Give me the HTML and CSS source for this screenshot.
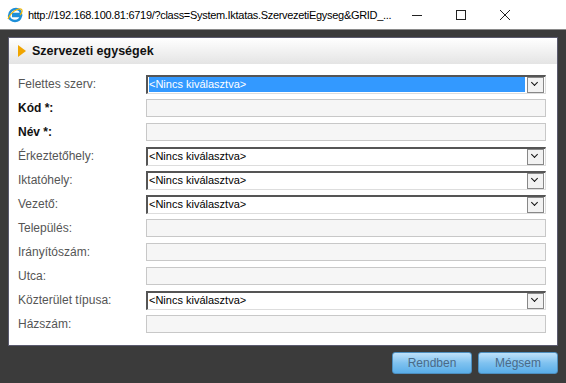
FILE: index.html
```html
<!DOCTYPE html>
<html lang="hu">
<head>
    <meta charset="UTF-8">
    <title>Szervezeti egységek</title>
    <link rel="stylesheet" href="styles.css">
</head>
<body>
    <div class="titlebar">
        <svg class="ie-logo" width="16" height="16" viewBox="0 0 16 16">
            <path d="M2 9 C2 4 6 2 9 2 C12 2 14 4 14 7 L5 7 M5 9 L14 9 C13 13 10 14 8 14 C5 14 2 12 2 9" fill="none" stroke="#1e8fd8" stroke-width="2.4"/>
            <path d="M1 12 C3 6 10 1 14 2 C16 3 15 6 13 8" fill="none" stroke="#f2b600" stroke-width="1.2"/>
        </svg>
        <span class="url">http://192.168.100.81:6719/?class=System.Iktatas.SzervezetiEgyseg&amp;GRID_...</span>
        <div class="win-buttons">
            <svg width="12" height="12" viewBox="0 0 12 12"><path d="M1 6.5 H11" stroke="#222" stroke-width="1"/></svg>
            <svg width="12" height="12" viewBox="0 0 12 12"><rect x="1.5" y="1.5" width="9" height="9" fill="none" stroke="#222" stroke-width="1"/></svg>
            <svg width="12" height="12" viewBox="0 0 12 12"><path d="M1 1 L11 11 M11 1 L1 11" stroke="#222" stroke-width="1"/></svg>
        </div>
    </div>

    <div class="frame">
        <div class="panel">
            <div class="panel-header">
                <span class="arrow"></span>
                <span>Szervezeti egységek</span>
            </div>
            <div class="form">
                <div class="row">
                    <label>Felettes szerv:</label>
                    <div class="combo selected"><span class="value">&lt;Nincs kiválasztva&gt;</span><span class="drop"></span></div>
                </div>
                <div class="row">
                    <label class="req">Kód *:</label>
                    <div class="field"></div>
                </div>
                <div class="row">
                    <label class="req">Név *:</label>
                    <div class="field"></div>
                </div>
                <div class="row">
                    <label>Érkeztetőhely:</label>
                    <div class="combo"><span class="value">&lt;Nincs kiválasztva&gt;</span><span class="drop"></span></div>
                </div>
                <div class="row">
                    <label>Iktatóhely:</label>
                    <div class="combo"><span class="value">&lt;Nincs kiválasztva&gt;</span><span class="drop"></span></div>
                </div>
                <div class="row">
                    <label>Vezető:</label>
                    <div class="combo"><span class="value">&lt;Nincs kiválasztva&gt;</span><span class="drop"></span></div>
                </div>
                <div class="row">
                    <label>Település:</label>
                    <div class="field"></div>
                </div>
                <div class="row">
                    <label>Irányítószám:</label>
                    <div class="field"></div>
                </div>
                <div class="row">
                    <label>Utca:</label>
                    <div class="field"></div>
                </div>
                <div class="row">
                    <label>Közterület típusa:</label>
                    <div class="combo"><span class="value">&lt;Nincs kiválasztva&gt;</span><span class="drop"></span></div>
                </div>
                <div class="row">
                    <label>Házszám:</label>
                    <div class="field"></div>
                </div>
            </div>
        </div>
        <div class="actions">
            <button>Rendben</button>
            <button>Mégsem</button>
        </div>
    </div>
</body>
</html>
```

FILE: styles.css
```css
body {
    margin: 0;
    font-family: "Liberation Sans", Arial, sans-serif;
    font-size: 12px;
    background: #3b3b3b;
    width: 566px;
    height: 383px;
    overflow: hidden;
}

.titlebar {
    height: 30px;
    background: #fff;
    display: flex;
    align-items: center;
    padding-left: 7px;
    box-sizing: border-box;
    border-bottom: 1px solid #8a8a8a;
}

.ie-logo {
    margin-right: 5px;
    flex-shrink: 0;
}

.url {
    font-family: "Liberation Sans", Arial, sans-serif;
    font-size: 11px;
    letter-spacing: -0.3px;
    color: #000;
    white-space: nowrap;
}

.win-buttons {
    margin-left: auto;
    display: flex;
    gap: 32px;
    padding-right: 55px;
    flex-shrink: 0;
}

.frame {
    padding: 7px 8px 0 8px;
}

.panel {
    background: #fff;
    border: 1px solid #5a5a6e;
    height: 309px;
    box-sizing: border-box;
}

.panel-header {
    height: 26px;
    background: linear-gradient(to bottom, #ffffff, #e4e4e4);
    display: flex;
    align-items: center;
    font-weight: bold;
    font-size: 12.5px;
    color: #111;
    padding-left: 9px;
}

.arrow {
    width: 0;
    height: 0;
    border-top: 6px solid transparent;
    border-bottom: 6px solid transparent;
    border-left: 8px solid #f0a500;
    margin-right: 6px;
}

.form {
    padding: 8px 11px 0 9px;
}

.row {
    display: flex;
    align-items: center;
    height: 24px;
}

.row label {
    width: 128px;
    color: #555;
}

.row label.req {
    color: #111;
    font-weight: bold;
}

.field {
    flex: 1;
    height: 18px;
    background: #f6f6f6;
    border: 1px solid #c8c8c8;
    box-sizing: border-box;
}

.combo {
    flex: 1;
    height: 19px;
    box-sizing: border-box;
    border-top: 2px solid #555;
    border-left: 2px solid #555;
    border-right: 1px solid #ddd;
    border-bottom: 1px solid #ddd;
    background: #fff;
    display: flex;
    align-items: center;
    padding-left: 1px;
    font-size: 11px;
    color: #000;
}

.combo .value {
    flex: 1;
    line-height: 15px;
    height: 15px;
}

.combo.selected .value {
    background: #3399ff;
    color: #fff;
}

.drop {
    width: 15px;
    height: 14px;
    border: 1px solid #888;
    background: #f2f2f2;
    margin: 0 1px 0 2px;
    position: relative;
}

.drop::after {
    content: "";
    position: absolute;
    left: 4px;
    top: 2px;
    width: 4px;
    height: 4px;
    border-right: 1.5px solid #111;
    border-bottom: 1.5px solid #111;
    transform: rotate(45deg);
}

.actions {
    display: flex;
    justify-content: flex-end;
    gap: 6px;
    padding-top: 6px;
}

.actions button {
    width: 80px;
    height: 22px;
    border: 1px solid #4d8fc0;
    border-radius: 3px;
    background: linear-gradient(to bottom, #bfe1fa, #7fc2f0 50%, #5aaee9);
    color: #4a6a88;
    font-family: "Liberation Sans", Arial, sans-serif;
    font-size: 12px;
}
```
